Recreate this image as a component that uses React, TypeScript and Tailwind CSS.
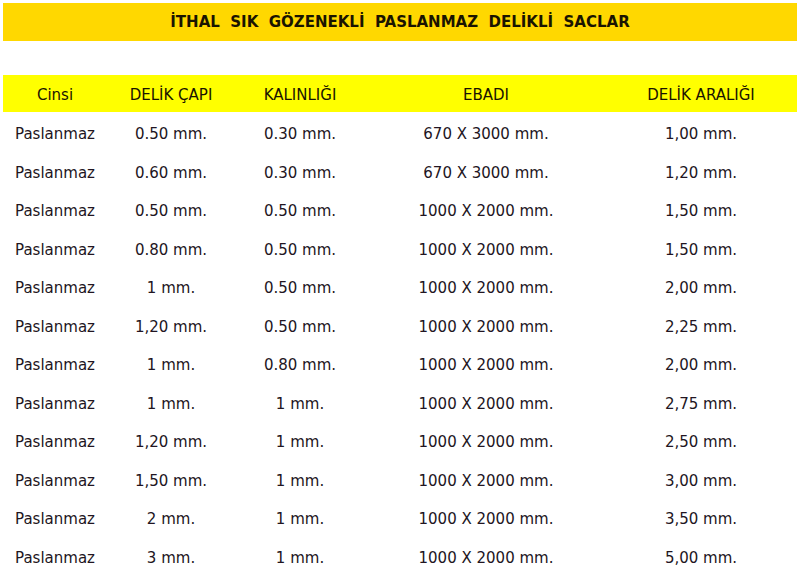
import React from 'react';

const cols = ['Cinsi', 'DELİK ÇAPI', 'KALINLIĞI', 'EBADI', 'DELİK ARALIĞI'];

const rows: string[][] = [
  ['Paslanmaz', '0.50 mm.', '0.30 mm.', '670 X 3000 mm.', '1,00 mm.'],
  ['Paslanmaz', '0.60 mm.', '0.30 mm.', '670 X 3000 mm.', '1,20 mm.'],
  ['Paslanmaz', '0.50 mm.', '0.50 mm.', '1000 X 2000 mm.', '1,50 mm.'],
  ['Paslanmaz', '0.80 mm.', '0.50 mm.', '1000 X 2000 mm.', '1,50 mm.'],
  ['Paslanmaz', '1 mm.', '0.50 mm.', '1000 X 2000 mm.', '2,00 mm.'],
  ['Paslanmaz', '1,20 mm.', '0.50 mm.', '1000 X 2000 mm.', '2,25 mm.'],
  ['Paslanmaz', '1 mm.', '0.80 mm.', '1000 X 2000 mm.', '2,00 mm.'],
  ['Paslanmaz', '1 mm.', '1 mm.', '1000 X 2000 mm.', '2,75 mm.'],
  ['Paslanmaz', '1,20 mm.', '1 mm.', '1000 X 2000 mm.', '2,50 mm.'],
  ['Paslanmaz', '1,50 mm.', '1 mm.', '1000 X 2000 mm.', '3,00 mm.'],
  ['Paslanmaz', '2 mm.', '1 mm.', '1000 X 2000 mm.', '3,50 mm.'],
  ['Paslanmaz', '3 mm.', '1 mm.', '1000 X 2000 mm.', '5,00 mm.'],
];

const grid = 'grid grid-cols-[104px_128px_130px_242px_188px]';

export default function App() {
  return (
    <div className="w-[800px] h-[582px] bg-white px-[3px] pt-[3px] font-['DejaVu_Sans',sans-serif] text-[15px] text-[#221522] overflow-hidden">
      {/* başlık */}
      <div className="h-[38px] bg-[#ffd800] flex items-center justify-center pt-[1px]">
        <span className="font-bold text-[15px] text-[#1a1400] whitespace-pre">
          İTHAL  SIK  GÖZENEKLİ  PASLANMAZ  DELİKLİ  SACLAR
        </span>
      </div>

      <div className="mt-[34px]">
        <div className={`${grid} h-[37px] bg-[#ffff00] items-center pt-[4px] text-[#1a1400]`}>
          {cols.map((c) => (
            <div key={c} className="text-center">{c}</div>
          ))}
        </div>

        <div className="pt-[3px]">
          {rows.map((r, i) => (
            <div key={i} className={`${grid} h-[38.5px] items-center`}>
              {r.map((v, j) => (
                <div key={j} className="text-center">{v}</div>
              ))}
            </div>
          ))}
        </div>
      </div>
    </div>
  );
}
